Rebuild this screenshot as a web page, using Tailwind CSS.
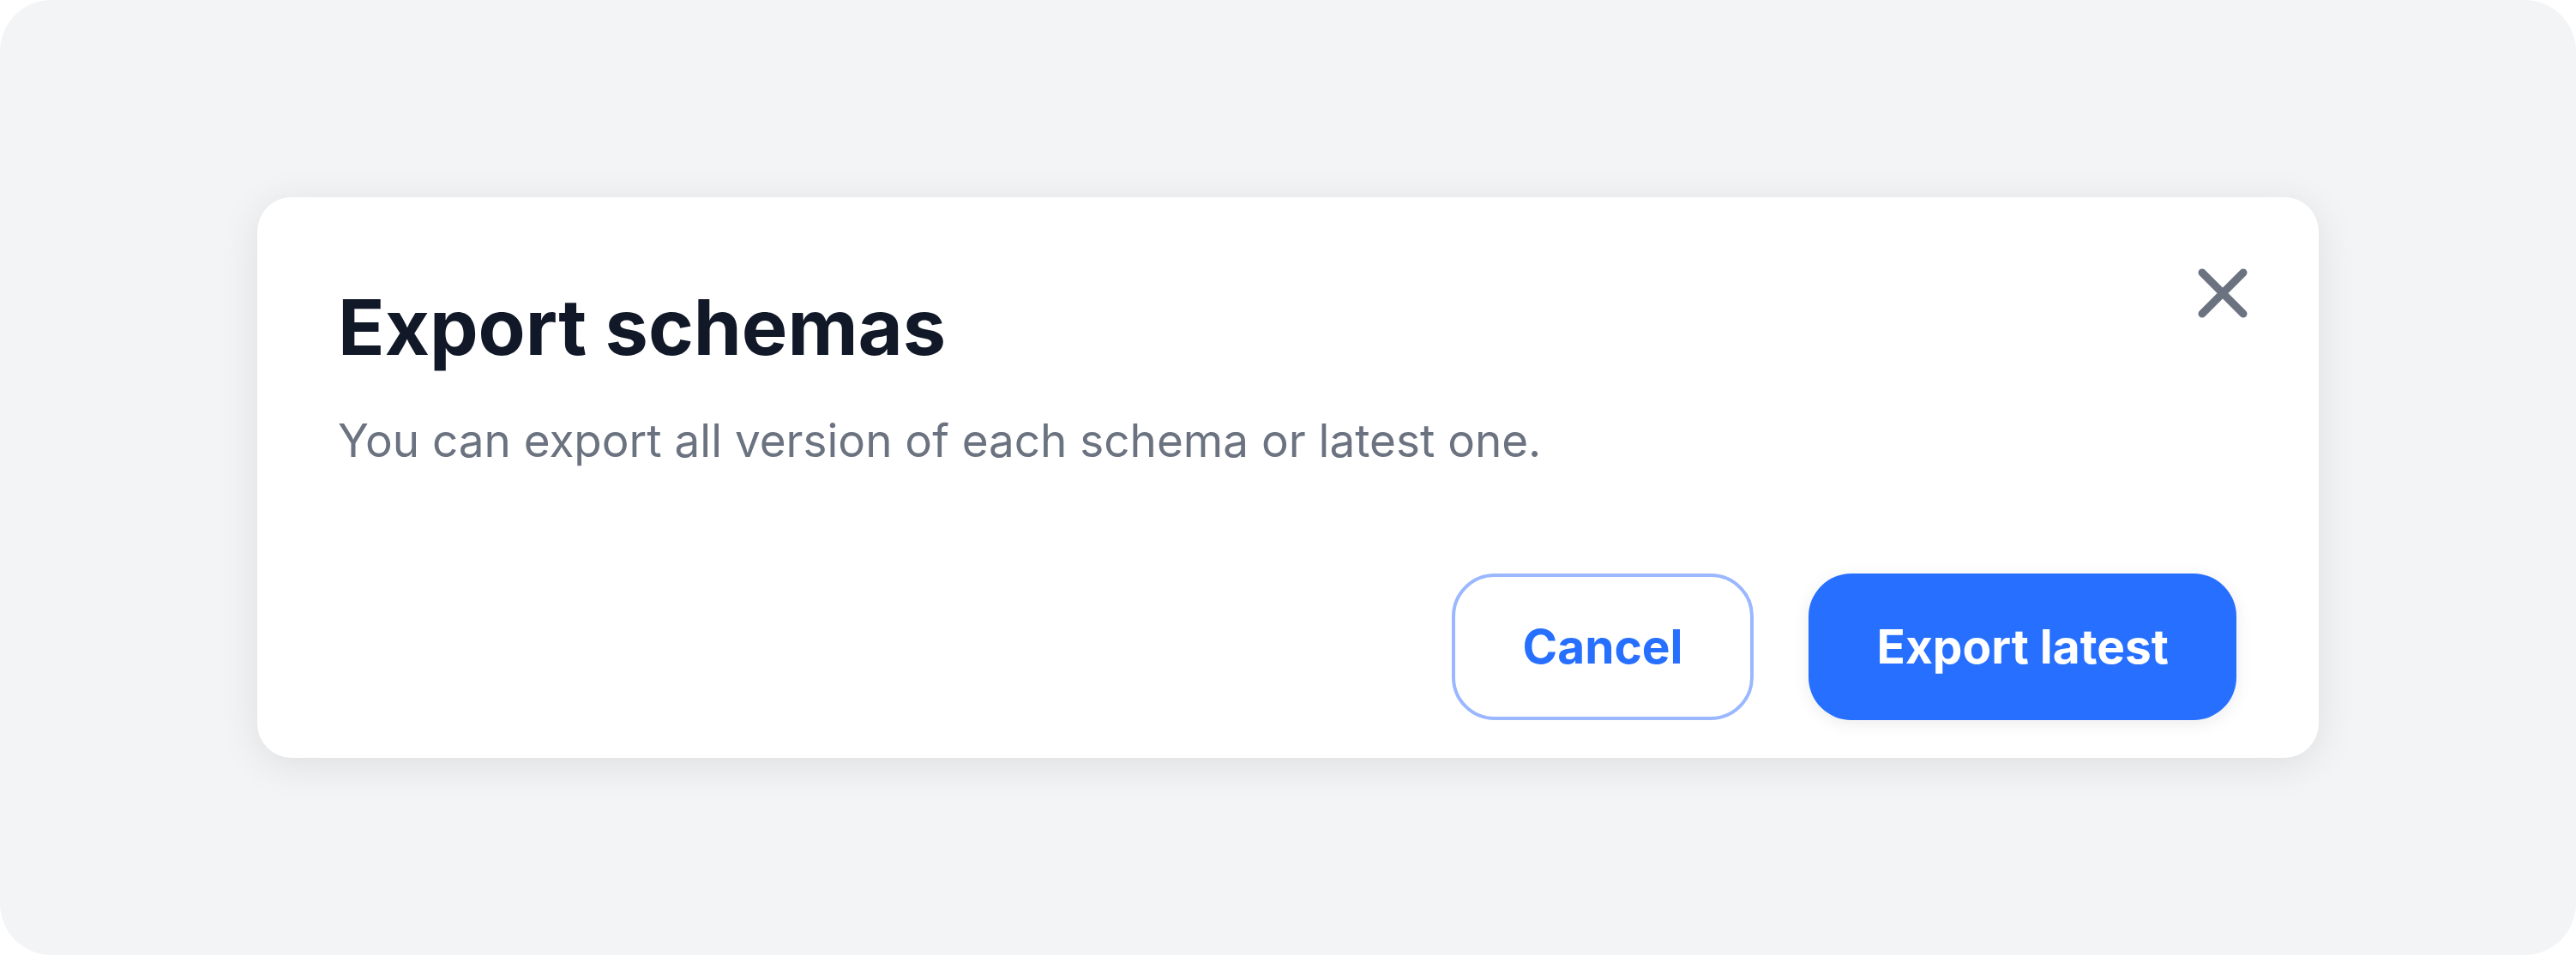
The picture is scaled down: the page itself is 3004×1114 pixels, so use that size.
<!DOCTYPE html>
<html lang="en">
<head>
    <meta charset="UTF-8">
    <meta name="viewport" content="width=device-width, initial-scale=1.0">
    <title>Export schemas</title>
    <script src="https://cdn.jsdelivr.net/npm/@tailwindcss/browser@4"></script>
</head>
<body class="bg-white font-['Inter',sans-serif]">
    <main class="flex min-h-screen items-center rounded-[60px] bg-[#f3f4f6] px-[300px]">
        <div role="dialog" aria-labelledby="title" class="relative w-full rounded-[40px] bg-white pt-[104px] pr-24 pb-11 pl-[94px] shadow-[0_8px_48px_rgba(0,0,0,0.09)]">
            <button type="button" aria-label="Close" class="absolute top-20 right-20 text-[#6b7280]">
                <svg class="size-16" viewBox="0 0 64 64" fill="none" stroke="currentColor" stroke-width="9" stroke-linecap="round">
                    <path d="M8 8L56 56M56 8L8 56"/>
                </svg>
            </button>
            <h1 id="title" class="text-[90px] leading-24 font-bold text-[#111827]">Export schemas</h1>
            <p class="mt-11 text-[53px] leading-20 text-[#6b7280]">You can export all version of each schema or latest one.</p>
            <div class="mt-[115px] flex justify-end gap-16 text-[55px] font-bold">
                <button type="button" class="h-[171px] rounded-[50px] border-4 border-[#9ab7ff] px-[79px] text-[#276fff]">Cancel</button>
                <button type="button" class="h-[171px] rounded-[50px] bg-[#276fff] px-[79px] text-white shadow-[0_4px_20px_rgba(0,0,0,0.08)]">Export latest</button>
            </div>
        </div>
    </main>
</body>
</html>
